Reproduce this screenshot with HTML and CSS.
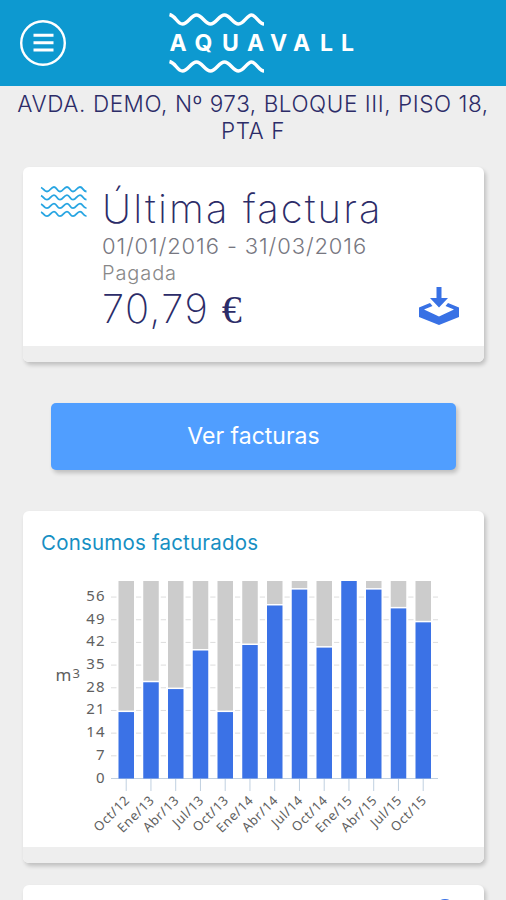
FILE: index.html
```html
<!DOCTYPE html>
<html lang="es">
<head>
	<meta charset="UTF-8">
	<title>Aquavall</title>
	<link rel="stylesheet" href="styles.css">
</head>
<body>
<header class="header">
	<svg class="menu" width="46" height="46" viewBox="0 0 46 46">
		<circle cx="23" cy="23" r="21.8"/>
		<path d="M13.500 15.300h20M13.500 22.800h20M13.500 30h20"/>
	</svg>
	<svg class="logo" width="190" height="64" viewBox="0 0 190 64">
		<path class="wave" d="M1.500 4.500C8 6 9 14 14.500 14S23 5 28.500 5S37 14 42.500 14S51 5 56.500 5S65 14 70.500 14S79 5 83.500 5S91 14 96 14"/>
		<path class="wave" d="M1.500 51.500C8 53 9 61 14.500 61S23 52 28.500 52S37 61 42.500 61S51 52 56.500 52S65 61 70.500 61S79 52 83.500 52S91 61 96 61"/>
		<text class="brand" y="40.500" x="1.500 26.500 54 79 102 125 152 173">AQUAVALL</text>
	</svg>
</header>
<main class="main">
	<p class="address">AVDA. DEMO, Nº 973, BLOQUE III, PISO 18,<br>PTA F</p>
	<section class="card">
		<div class="bill">
			<svg class="waves" width="48" height="34" viewBox="0 0 48 34">
				<path d="M1 2.500C4 3.500 4 6.500 7 6.500S11 2 14 2S17 6.500 20 6.500S24 2 27 2S30 6.500 33 6.500S37 2 40 2S43 6.500 46.500 6.500"/>
				<path d="M1 10.700C4 11.700 4 14.700 7 14.700S11 10.200 14 10.200S17 14.700 20 14.700S24 10.200 27 10.200S30 14.700 33 14.700S37 10.200 40 10.200S43 14.700 46.500 14.700"/>
				<path d="M1 19.200C4 20.200 4 23.200 7 23.200S11 18.700 14 18.700S17 23.200 20 23.200S24 18.700 27 18.700S30 23.200 33 23.200S37 18.700 40 18.700S43 23.200 46.500 23.200"/>
				<path d="M1 27.200C4 28.200 4 31.200 7 31.200S11 26.700 14 26.700S17 31.200 20 31.200S24 26.700 27 26.700S30 31.200 33 31.200S37 26.700 40 26.700S43 31.200 46.500 31.200"/>
			</svg>
			<div class="info">
				<h2 class="title">Última factura</h2>
				<p class="dates">01/01/2016 - 31/03/2016</p>
				<p class="status">Pagada</p>
				<p class="amount">70,79 <span class="euro">€</span></p>
			</div>
			<svg class="download" width="42" height="39" viewBox="0 0 42 39">
				<path d="M18.500 0h5v11H30L21 20.500L12 11h6.500z"/>
				<path d="M12 16L14.500 19L6 22.500L21 29.500L36 22.500L27.500 19L30 16L41 20.500V30L21 38L1 30V20.500z"/>
			</svg>
		</div>
		<div class="foot"></div>
	</section>
	<a class="button">Ver facturas</a>
	<section class="card">
		<div class="usage">
			<h3 class="subtitle">Consumos facturados</h3>
			<svg class="chart" id="chart" width="400" height="270" viewBox="0 0 400 270"></svg>
		</div>
		<div class="foot"></div>
	</section>
	<section class="card next">
		<svg width="22" height="2" viewBox="0 0 22 2"><circle cx="11" cy="11" r="9"/></svg>
	</section>
</main>
<script>
	var chart = document.getElementById('chart'),
	    names = ['Oct/12', 'Ene/13', 'Abr/13', 'Jul/13', 'Oct/13', 'Ene/14', 'Abr/14', 'Jul/14', 'Oct/14', 'Ene/15', 'Abr/15', 'Jul/15', 'Oct/15'],
	    values = [20.5, 29.7, 27.6, 39.5, 20.5, 41.2, 53.4, 58.3, 40.4, 61, 58.3, 52.5, 48.2],
	    base = 208.5,
	    top0 = 11,
	    unit = 3.24,
	    html = '';

	// horizontal lines and scale
	for(var v=0; v<=56; v+=7){
		var y = base - v*unit;
		html += '<line class="' + (v ? 'grid' : 'axis') + '" x1="71" x2="398" y1="' + y + '" y2="' + y + '"/>';
		html += '<text class="scale" x="65.5" y="' + (y + 4) + '">' + v + '</text>';
	}

	// bars
	for(var i=0; i<values.length; i++){
		var x = 78.5 + i*24.75,
		    h = Math.min(values[i]*unit, base - top0),
		    t = base - h;
		// white gap around the bar
		html += '<rect class="gap" x="' + (x - 2) + '" y="' + top0 + '" width="19.5" height="' + (base - top0 - 1) + '"/>';
		if(t > top0 + 2){
			html += '<rect class="rest" x="' + x + '" y="' + top0 + '" width="15.5" height="' + (t - top0 - 1.5) + '"/>';
		}
		html += '<rect class="bar" x="' + x + '" y="' + t + '" width="15.5" height="' + h + '"/>';
		html += '<line class="tick" x1="' + (x + 7.7) + '" x2="' + (x + 7.7) + '" y1="209" y2="221"/>';
		html += '<text class="name" transform="translate(' + (x + 12) + ' 231) rotate(-45)">' + names[i] + '</text>';
	}

	html += '<text class="unit" x="15.5" y="111">m<tspan class="cube" dx="1" dy="-3">3</tspan></text>';
	chart.innerHTML = html;
</script>
</body>
</html>
```
FILE: styles.css
```css
body {
	margin: 0;
	background: #eee;
	font-family: Inter, "Liberation Sans", sans-serif;
	color: #2c2c68;
}
h2, h3, p {
	margin: 0;
	font-weight: 300;
	white-space: nowrap;
}
svg {
	display: block;
	flex: none;
}
.header {
	display: flex;
	height: 86px;
	background: #0d99d0;
	box-sizing: border-box;
	padding: 10px 20px 0;
}
.menu {
	margin-top: 10px;
	fill: none;
	stroke: #fff;
	stroke-width: 2.4;
}
.menu path {
	stroke-width: 3;
}
.logo {
	margin-left: 102px;
}
.wave {
	fill: none;
	stroke: #fff;
	stroke-width: 3.4;
}
.brand {
	fill: #fff;
	font-size: 23px;
	font-weight: 700;
}
.main {
	padding: 0 22px 0 23px;
}
.address {
	margin: 4px -22px 0 -23px;
	height: 77px;
	text-align: center;
	font-size: 22.5px;
	line-height: 27px;
	letter-spacing: .57px;
}
.card {
	background: #fff;
	border-radius: 6px;
	box-shadow: 2px 3px 4px rgba(0, 0, 0, .2);
	overflow: hidden;
}
.bill {
	display: flex;
	height: 179px;
}
.waves {
	margin: 18px 0 0 17px;
	fill: none;
	stroke: #27a5e2;
	stroke-width: 1.8;
}
.info {
	flex: 1;
	margin: 18px 0 0 14px;
}
.title {
	font-size: 40px;
	line-height: 48px;
	font-weight: 200;
	letter-spacing: 2.1px;
}
.dates {
	color: #777781;
	font-size: 22px;
	line-height: 27px;
	letter-spacing: .9px;
}
.status {
	color: #888;
	font-size: 20px;
	line-height: 27px;
	letter-spacing: .9px;
}
.amount {
	font-size: 40px;
	line-height: 44px;
	font-weight: 200;
	letter-spacing: 1.4px;
}
.euro {
	font-family: "Liberation Serif", serif;
}
.download {
	margin: 120px 24px 0 0;
	fill: #3871e5;
}
.foot {
	height: 16px;
	background: #eee;
}
.button {
	display: block;
	margin: 41px 28px;
	height: 67px;
	border-radius: 5px;
	background: #509eff;
	box-shadow: 2px 3px 4px rgba(0, 0, 0, .2);
	color: #fff;
	text-align: center;
	font-size: 23px;
	line-height: 67px;
}
.usage {
	height: 336px;
}
.subtitle {
	padding: 18px 0 0 18px;
	height: 41px;
	color: #168fc3;
	font-size: 20.5px;
	line-height: 28px;
	font-weight: 400;
	letter-spacing: .2px;
}
.chart {
	margin-left: 17px;
	font-family: "Noto Sans", sans-serif;
}
.grid {
	stroke: #ddd;
}
.axis, .tick {
	stroke: #c0d0e0;
}
.gap {
	fill: #fff;
}
.rest {
	fill: #ccc;
}
.bar {
	fill: #3b72e6;
}
.scale {
	fill: #606060;
	font-size: 15px;
	letter-spacing: 1px;
	text-anchor: end;
}
.name {
	fill: #606060;
	font-size: 13px;
	letter-spacing: .6px;
	text-anchor: end;
}
.unit {
	fill: #606060;
	font-size: 17px;
}
.cube {
	font-size: 13px;
}
.next {
	margin-top: 22px;
	height: 15px;
	border-radius: 6px 6px 0 0;
}
.next svg {
	margin: 13px 0 0 411px;
	fill: none;
	stroke: #3871e5;
	stroke-width: 2;
}
```
